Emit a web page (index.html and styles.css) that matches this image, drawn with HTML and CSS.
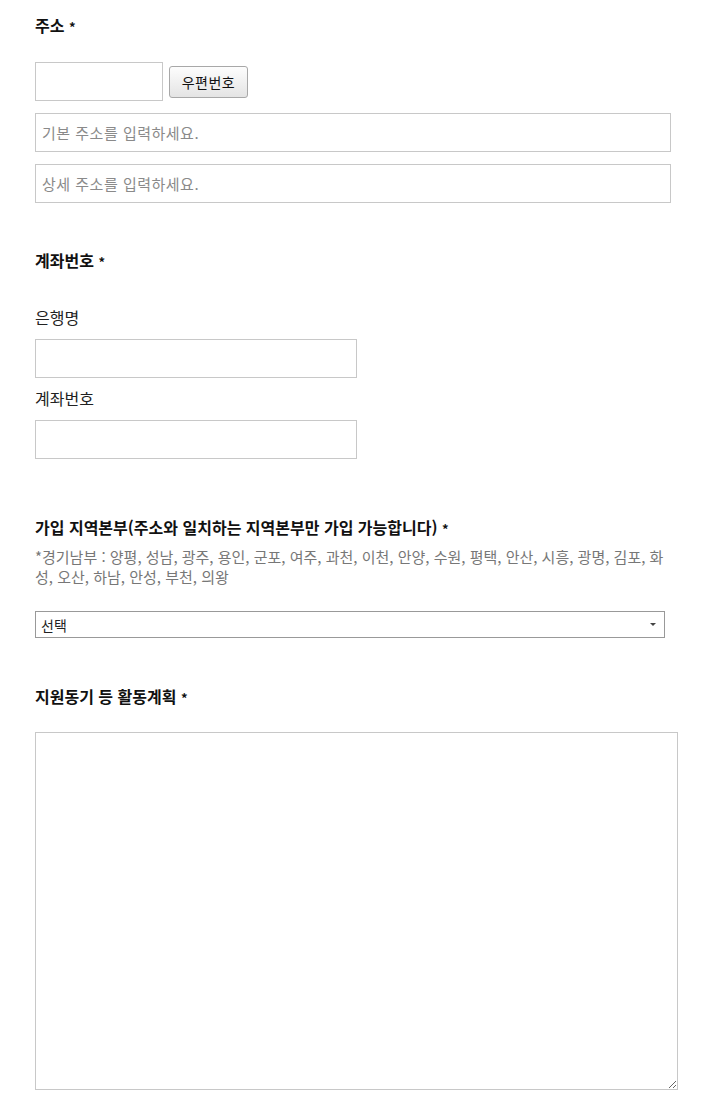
FILE: index.html
```html
<!DOCTYPE html>
<html lang="ko">
<head>
    <meta charset="UTF-8">
    <meta name="viewport" content="width=device-width, initial-scale=1.0">
    <title>회원가입</title>
    <link rel="stylesheet" href="styles.css">
</head>
<body>
    <div class="form">
        <div class="field addr-field">
            <h3 class="field-title">주소 <span class="req">*</span></h3>
            <div class="zip-row">
                <input type="text" class="input zip-input">
                <button type="button" class="zip-btn">우편번호</button>
            </div>
            <input type="text" class="input full" placeholder="기본 주소를 입력하세요.">
            <input type="text" class="input full" placeholder="상세 주소를 입력하세요.">
        </div>

        <div class="field bank-field">
            <h3 class="field-title">계좌번호 <span class="req">*</span></h3>
            <label class="sub-label first">은행명</label>
            <input type="text" class="input half">
            <label class="sub-label">계좌번호</label>
            <input type="text" class="input half">
        </div>

        <div class="field region-field">
            <h3 class="field-title">가입 지역본부(주소와 일치하는 지역본부만 가입 가능합니다) <span class="req">*</span></h3>
            <p class="desc">*경기남부 : 양평, 성남, 광주, 용인, 군포, 여주, 과천, 이천, 안양, 수원, 평택, 안산, 시흥, 광명, 김포, 화성, 오산, 하남, 안성, 부천, 의왕</p>
            <div class="select-wrap">
                <select class="select">
                    <option>선택</option>
                </select>
            </div>
        </div>

        <div class="field plan-field">
            <h3 class="field-title">지원동기 등 활동계획 <span class="req">*</span></h3>
            <textarea class="textarea"></textarea>
        </div>
    </div>
</body>
</html>
```

FILE: styles.css
```css
body {
    margin: 0;
    padding: 0;
    background-color: #fff;
    font-family: "Noto Sans CJK KR", "Noto Sans", sans-serif;
    color: #222;
}

.form {
    padding: 14px 35px 0;
}

.field-title {
    margin: 0;
    height: 22px;
    font-size: 16px;
    line-height: 22px;
    font-weight: bold;
    color: #111;
}

.req {
    font-size: 13px;
    line-height: 0;
}

.bank-field {
    margin-top: 46px;
}

.region-field {
    margin-top: 57px;
}

.plan-field {
    margin-top: 47px;
}

.input {
    display: block;
    box-sizing: border-box;
    height: 39px;
    padding: 0 6px;
    border: 1px solid #c8c8c8;
    font-family: inherit;
    font-size: 15px;
    letter-spacing: 0.5px;
    color: #333;
    outline: none;
}

.input::placeholder {
    color: #8a8a8a;
}

.zip-row {
    display: flex;
    align-items: center;
    gap: 6px;
    margin-top: 26px;
}

.zip-input {
    width: 128px;
}

.zip-btn {
    box-sizing: border-box;
    width: 79px;
    height: 32px;
    padding: 0;
    border: 1px solid #a8a8a8;
    border-radius: 3px;
    background: linear-gradient(#fdfdfd, #e4e4e4);
    font-family: inherit;
    font-size: 14px;
    letter-spacing: 0.5px;
    color: #111;
    cursor: pointer;
}

.full {
    width: 636px;
    margin-top: 12px;
}

.half {
    width: 322px;
    margin-top: 10px;
}

.sub-label {
    display: block;
    margin-top: 8px;
    font-size: 16px;
    line-height: 24px;
    color: #222;
}

.sub-label.first {
    margin-top: 34px;
}

.desc {
    width: 630px;
    margin: 9px 0 0;
    font-size: 15px;
    line-height: 20px;
    color: #777;
}

.select-wrap {
    position: relative;
    width: 630px;
    margin-top: 24px;
}

.select-wrap::after {
    content: "";
    position: absolute;
    right: 9px;
    top: 12px;
    border-left: 3px solid transparent;
    border-right: 3px solid transparent;
    border-top: 3px solid #444;
    pointer-events: none;
}

.select {
    display: block;
    box-sizing: border-box;
    width: 100%;
    height: 27px;
    padding: 0 5px;
    border: 1px solid #999;
    border-radius: 0;
    background: #fff;
    font-family: inherit;
    font-size: 14px;
    color: #222;
    appearance: none;
    -webkit-appearance: none;
    outline: none;
}

.textarea {
    display: block;
    box-sizing: border-box;
    width: 643px;
    height: 358px;
    margin-top: 25px;
    border: 1px solid #c8c8c8;
    font-family: inherit;
    font-size: 14px;
    outline: none;
}
```
